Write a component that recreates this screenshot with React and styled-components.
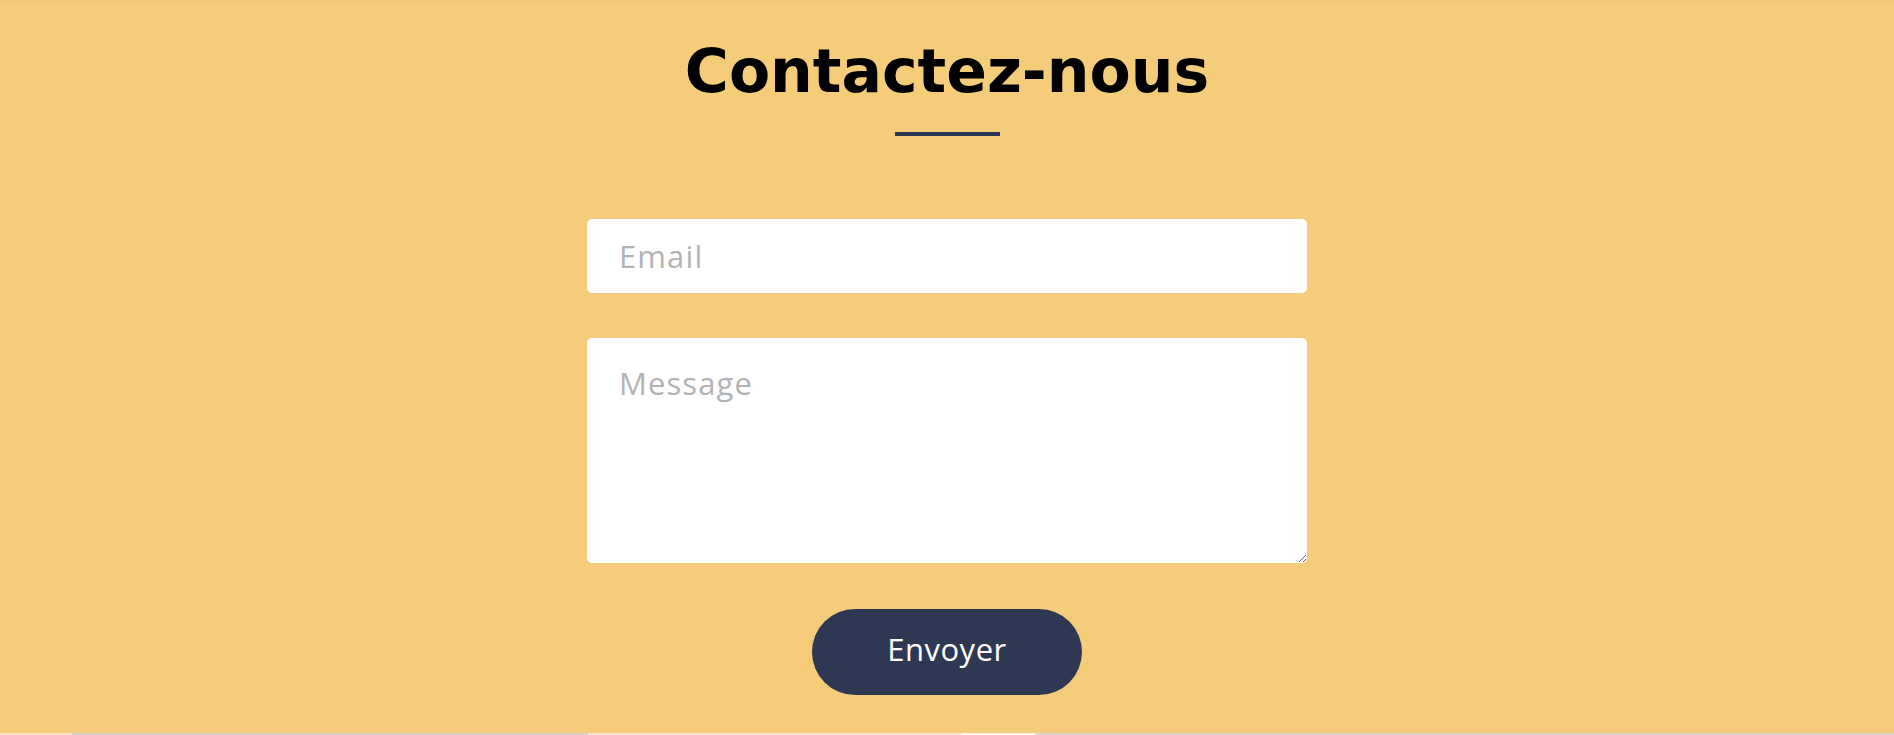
import React from 'react';
import styled, { createGlobalStyle } from 'styled-components';

const GlobalStyle = createGlobalStyle`
    html, body {
        margin: 0;
        padding: 0;
        background: #f5cd7a;
    }
`;

const Section = styled.section`
    background-color: #f5cd7a;
    border-top: 1px solid #efc776;
    height: 733px;
    box-sizing: border-box;
    padding-top: 36px;
    display: flex;
    flex-direction: column;
    align-items: center;
`;

const Title = styled.h1`
    margin: 0;
    font-family: "DejaVu Sans", Verdana, sans-serif;
    font-weight: bold;
    font-size: 60px;
    color: #000;
    line-height: 1.164;
`;

const Underline = styled.div`
    width: 105px;
    height: 4px;
    background-color: #2e3752;
    margin-top: 25px;
`;

const Form = styled.form`
    width: 720px;
    margin-top: 83px;
    display: flex;
    flex-direction: column;
    align-items: center;
    gap: 45px;
`;

const Field = styled.input`
    box-sizing: border-box;
    width: 100%;
    height: ${props => props.tall ? '225px' : '74px'};
    border: none;
    border-radius: 5px;
    background: #fff;
    padding: ${props => props.tall ? '24px 32px' : '0 32px'};
    font-family: "Open Sans", sans-serif;
    font-size: 31px;
    color: #333;
    outline: none;

    &::placeholder {
        color: #b3b3b3;
        letter-spacing: 1.1px;
    }
`;

const Button = styled.button`
    width: 270px;
    height: 86px;
    margin-top: 1px;
    padding: 0 0 6px;
    border: none;
    border-radius: 43px;
    background-color: #2f3853;
    color: #fff;
    font-family: "Open Sans", sans-serif;
    font-size: 31px;
    letter-spacing: 0.5px;
    cursor: pointer;
`;

const Strip = styled.div`
    display: flex;
    height: 2px;
`;

const StripPart = styled.div`
    width: ${props => props.w}px;
    background-color: ${props => props.color};
`;

const stripParts = [
    { w: 72, color: '#efe2cd' },
    { w: 516, color: '#cfcfcf' },
    { w: 373, color: '#eee3d4' },
    { w: 74, color: '#faf6ee' },
    { w: 859, color: '#d6d6d6' },
];

export default function App() {
    return (
        <>
            <GlobalStyle />
            <Section>
                <Title>Contactez-nous</Title>
                <Underline />
                <Form onSubmit={e => e.preventDefault()}>
                    <Field type="email" placeholder="Email" />
                    <Field as="textarea" tall placeholder="Message" />
                    <Button type="submit">Envoyer</Button>
                </Form>
            </Section>
            <Strip>
                {stripParts.map((p, i) => <StripPart key={i} w={p.w} color={p.color} />)}
            </Strip>
        </>
    );
}
